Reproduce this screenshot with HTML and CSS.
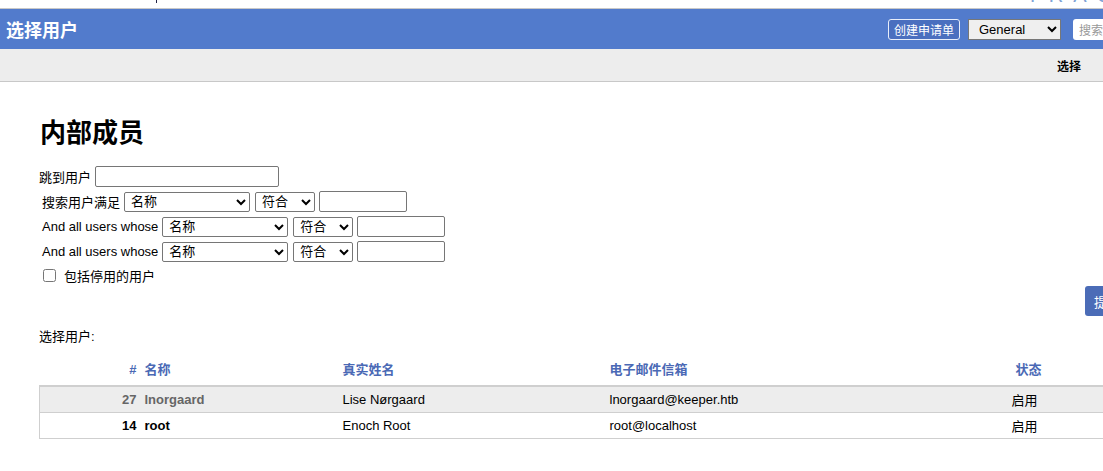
FILE: index.html
```html
<!DOCTYPE html>
<html lang="zh">
<head>
<meta charset="utf-8">
<title>选择用户</title>
<link rel="stylesheet" href="styles.css">
</head>
<body>
<div class="topstrip">
  <span class="tick"></span>
  <div class="logo"><span class="logo-mark">//</span><span class="logo-text">TRAC</span></div>
</div>
<header class="titlebar">
  <div class="title">选择用户</div>
  <div class="tools">
    <button class="create">创建申请单</button>
    <select class="queue"><option>General</option></select>
    <input class="search" type="text" placeholder="搜索">
  </div>
</header>
<nav class="subbar"><span class="tab">选择</span></nav>

<main class="content">
  <h1 class="heading">内部成员</h1>
  <form class="filters">
    <div class="row">
      <label class="lbl">跳到用户</label>
      <input class="txt jump" type="text">
    </div>
    <div class="row indent">
      <label class="lbl">搜索用户满足</label>
      <select class="sel field"><option>名称</option></select>
      <select class="sel op"><option>符合</option></select>
      <input class="txt val" type="text">
    </div>
    <div class="row indent">
      <label class="lbl">And all users whose</label>
      <select class="sel field"><option>名称</option></select>
      <select class="sel op"><option>符合</option></select>
      <input class="txt val" type="text">
    </div>
    <div class="row indent">
      <label class="lbl">And all users whose</label>
      <select class="sel field"><option>名称</option></select>
      <select class="sel op"><option>符合</option></select>
      <input class="txt val" type="text">
    </div>
    <div class="row check indent">
      <input type="checkbox" class="cb">
      <label class="cblbl">包括停用的用户</label>
    </div>
    <div class="actions"><button type="button" class="go">提交</button></div>
  </form>

  <p class="caption">选择用户:</p>

  <table class="users">
    <colgroup>
      <col class="c-id"><col class="c-name"><col class="c-real"><col class="c-mail"><col class="c-status">
    </colgroup>
    <thead>
      <tr><th class="num">#</th><th class="name">名称</th><th class="real">真实姓名</th><th class="mail">电子邮件信箱</th><th class="status">状态</th></tr>
    </thead>
    <tbody>
      <tr class="odd"><td class="num muted">27</td><td class="name muted">lnorgaard</td><td class="real">Lise Nørgaard</td><td class="mail">lnorgaard@keeper.htb</td><td class="status">启用</td></tr>
      <tr><td class="num strong">14</td><td class="name strong">root</td><td class="real">Enoch Root</td><td class="mail">root@localhost</td><td class="status">启用</td></tr>
    </tbody>
  </table>
</main>
</body>
</html>
```
FILE: styles.css
```css
html, body {
  margin: 0;
  padding: 0;
  overflow: hidden;
  background: #fff;
}
body {
  font-family: "Liberation Sans", "Noto Sans CJK SC", sans-serif;
  font-size: 13px;
  color: #000;
  width: 1103px;
}
.topstrip {
  height: 8px;
  border-bottom: 1px solid #c8c8c8;
  overflow: hidden;
  display: flex;
  justify-content: space-between;
  align-items: flex-start;
}
.tick {
  display: block;
  width: 1px;
  height: 3px;
  margin-left: 156px;
  background: #224;
}
.logo {
  display: flex;
  align-items: flex-start;
  margin-top: -14px;
  margin-right: -18px;
}
.logo-mark {
  font-size: 16px;
  font-weight: bold;
  color: #555;
  letter-spacing: -3px;
  margin-right: 14px;
  line-height: 18px;
}
.logo-text {
  font-size: 20px;
  letter-spacing: 10px;
  color: #7fa3d6;
  line-height: 18px;
}
.titlebar {
  height: 40px;
  background: #527bcc;
  display: flex;
  align-items: center;
  justify-content: space-between;
}
.title {
  color: #fff;
  font-weight: bold;
  font-size: 18px;
  padding-left: 6px;
  font-family: "Noto Sans CJK SC", sans-serif;
}
.tools {
  display: flex;
  align-items: center;
  margin-right: -30px;
}
.create {
  height: 21px;
  width: 72px;
  padding: 0;
  background: #4a6fbf;
  color: #fff;
  border: 1px solid #e8eefa;
  border-radius: 3px;
  font-size: 12px;
  font-family: "Noto Sans CJK SC", sans-serif;
  margin-right: 8px;
}
.queue {
  height: 21px;
  width: 93px;
  background: #efefef;
  border: 1px solid #777;
  border-radius: 0;
  font-size: 13px;
  font-family: "Liberation Sans", sans-serif;
  padding-left: 6px;
  margin-right: 12px;
  color: #000;
}
.search {
  height: 21px;
  width: 60px;
  box-sizing: border-box;
  border: none;
  border-radius: 3px;
  background: #fff;
  font-size: 12px;
  padding-left: 6px;
  font-family: "Noto Sans CJK SC", sans-serif;
}
.search::placeholder { color: #999; }
.subbar {
  height: 32px;
  background: #ededed;
  border-bottom: 1px solid #c8c8c8;
  display: flex;
  align-items: center;
  justify-content: flex-end;
}
.tab {
  font-weight: bold;
  font-size: 12px;
  font-family: "Noto Sans CJK SC", sans-serif;
  margin-right: 22px;
}
.content {
  padding-left: 39px;
  width: 1160px;
}
.heading {
  margin: 33px 0 0 1px;
  font-size: 26px;
  line-height: 31px;
  font-weight: bold;
  font-family: "Noto Sans CJK SC", sans-serif;
}
.filters {
  margin-top: 18px;
  width: 1120px;
}
.row {
  height: 25px;
  display: flex;
  align-items: center;
}
.row.indent { padding-left: 3px; }
.lbl {
  margin-right: 4px;
  white-space: nowrap;
}
.txt {
  box-sizing: border-box;
  height: 21px;
  border: 1px solid #767676;
  border-radius: 2px;
  padding: 0 3px;
  margin: 0;
}
.jump { width: 184px; }
.val { width: 88px; }
.sel {
  box-sizing: border-box;
  height: 20px;
  border: 1px solid #767676;
  border-radius: 2px;
  background: #fff;
  font-size: 13px;
  font-family: "Liberation Sans", "Noto Sans CJK SC", sans-serif;
  margin: 0 5px 0 0;
  padding: 0 2px;
  color: #000;
}
.field { width: 126px; }
.op { width: 60px; margin-right: 4px; }
.check { height: 23px; }
.cb {
  width: 13px;
  height: 13px;
  margin: 0 8px 0 1px;
}
.actions {
  display: flex;
  justify-content: flex-end;
  margin-top: -1px;
}
.go {
  width: 74px;
  height: 30px;
  background: #4b6cb7;
  color: #fff;
  border: none;
  border-radius: 3px;
  font-size: 13px;
  font-family: "Noto Sans CJK SC", sans-serif;
  text-align: left;
  padding-left: 9px;
}
.caption {
  margin: 13px 0 0 0;
  line-height: 16px;
}
.users {
  margin-top: 14px;
  width: 1120px;
  table-layout: fixed;
  border-collapse: collapse;
}
.c-id { width: 101px; }
.c-name { width: 198px; }
.c-real { width: 266px; }
.c-mail { width: 400px; }
.c-status { width: 155px; }
.users th {
  color: #4a69b5;
  font-weight: bold;
  line-height: 16px;
  text-align: left;
  font-family: "Liberation Sans", "Noto Sans CJK SC", sans-serif;
  padding: 3px 0 7px;
  border-bottom: 2px solid #cfcfcf;
}
.users td {
  height: 25px;
  padding: 0;
  border-bottom: 1px solid #cfcfcf;
}
.users tbody tr td:first-child { border-left: 1px solid #cfcfcf; }
.users tr.odd td { background: #ededed; }
.users .num { text-align: right; padding-right: 4px; }
.users .name { padding-left: 4px; }
.users .real { padding-left: 4px; }
.users .mail { padding-left: 5px; }
.users th.status { padding-left: 11px; }
.users td.status { padding-left: 7px; }
.muted { color: #666; font-weight: bold; }
.strong { font-weight: bold; }
```
